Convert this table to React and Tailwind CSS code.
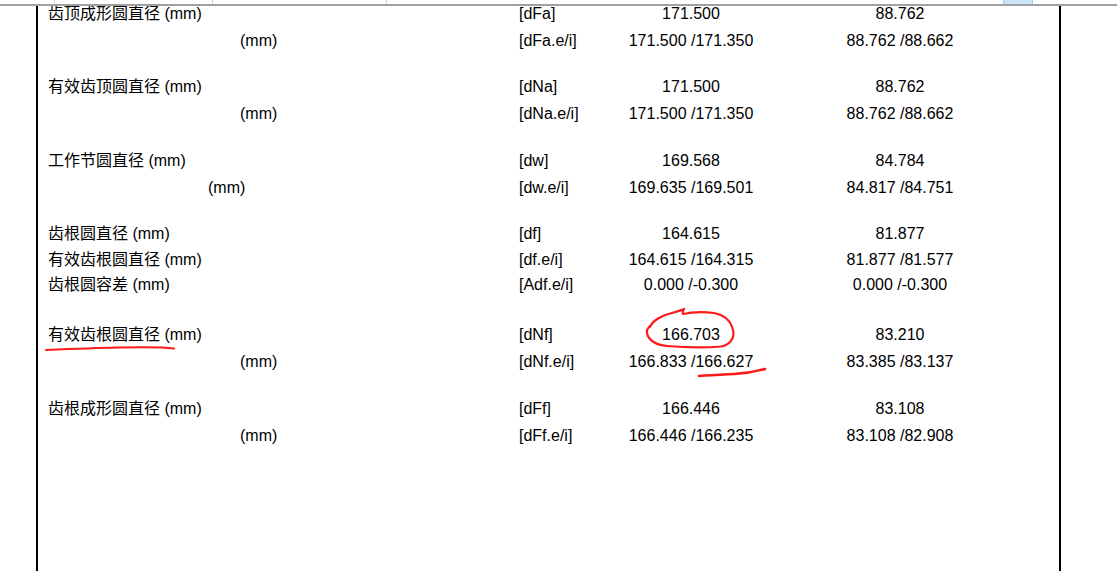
import React from 'react';

const rows = [
  { label: '齿顶成形圆直径 (mm)', indent: '', mt: '-mt-[5px]', sym: '[dFa]', a: '171.500', b: '88.762' },
  { label: '(mm)', indent: 'pl-[192px]', mt: 'mt-[2px]', sym: '[dFa.e/i]', a: '171.500 /171.350', b: '88.762 /88.662' },
  { label: '有效齿顶圆直径 (mm)', indent: '', mt: 'mt-[21px]', sym: '[dNa]', a: '171.500', b: '88.762' },
  { label: '(mm)', indent: 'pl-[192px]', mt: 'mt-[2px]', sym: '[dNa.e/i]', a: '171.500 /171.350', b: '88.762 /88.662' },
  { label: '工作节圆直径 (mm)', indent: '', mt: 'mt-[22px]', sym: '[dw]', a: '169.568', b: '84.784' },
  { label: '(mm)', indent: 'pl-[160px]', mt: 'mt-[2px]', sym: '[dw.e/i]', a: '169.635 /169.501', b: '84.817 /84.751' },
  { label: '齿根圆直径 (mm)', indent: '', mt: 'mt-[21px]', sym: '[df]', a: '164.615', b: '81.877' },
  { label: '有效齿根圆直径 (mm)', indent: '', mt: 'mt-[1px]', sym: '[df.e/i]', a: '164.615 /164.315', b: '81.877 /81.577' },
  { label: '齿根圆容差 (mm)', indent: '', mt: 'mt-0', sym: '[Adf.e/i]', a: '0.000 /-0.300', b: '0.000 /-0.300' },
  { label: '有效齿根圆直径 (mm)', indent: '', mt: 'mt-[25px]', sym: '[dNf]', a: '166.703', b: '83.210' },
  { label: '(mm)', indent: 'pl-[192px]', mt: 'mt-[2px]', sym: '[dNf.e/i]', a: '166.833 /166.627', b: '83.385 /83.137' },
  { label: '齿根成形圆直径 (mm)', indent: '', mt: 'mt-[22px]', sym: '[dFf]', a: '166.446', b: '83.108' },
  { label: '(mm)', indent: 'pl-[192px]', mt: 'mt-[2px]', sym: '[dFf.e/i]', a: '166.446 /166.235', b: '83.108 /82.908' },
];

// red pen marks drawn on top of the report
const Marks = () => (
  <svg className="absolute inset-0 pointer-events-none" width="1117" height="571" viewBox="0 0 1117 571">
    <path
      d="M46 350 C 70 349, 95 348, 118 347.5 C 140 347, 160 346.5, 174 348.5"
      fill="none"
      stroke="#ff1a1a"
      strokeWidth="2"
      strokeLinecap="round"
    />
    <path
      d="M650 327 C 652 321, 662 315, 672 313 C 677 312, 681 310, 684 309 C 683 311, 682 313, 683 314 C 692 312, 705 312, 714 313 C 724 315, 731 321, 733 330 C 735 338, 730 345, 721 346.5 C 705 348, 685 347.5, 667 346 C 656 345, 648 340, 647 333 C 646 330, 648 328, 650 326"
      fill="none"
      stroke="#ff1a1a"
      strokeWidth="2.2"
      strokeLinecap="round"
      strokeLinejoin="round"
    />
    <path
      d="M699 376 C 712 375, 724 374.5, 734 374 C 745 373.5, 754 372, 765 369"
      fill="none"
      stroke="#ff1a1a"
      strokeWidth="2.6"
      strokeLinecap="round"
    />
  </svg>
);

const App = () => {
  return (
    <div
      className="relative w-[1117px] h-[571px] overflow-hidden bg-white text-black flex flex-col"
      style={{ fontFamily: '"Liberation Sans", "Noto Sans CJK SC", sans-serif' }}
    >
      {/* header strip cut off at the top */}
      <div className="relative h-[4px] shrink-0 flex">
        <div className="w-[55px] border-r border-[#d4d4d4]" />
        <div className="w-[158px] border-r border-[#d4d4d4]" />
        <div className="w-[174px] border-r border-[#d4d4d4]" />
        <div className="w-[616px]" />
        <div className="w-[30px] bg-[#cce4f7] border-x border-[#99c9ef]" />
      </div>
      <div className="h-[2px] shrink-0 bg-[#a0a0a0]" />

      {/* report page */}
      <div className="ml-[36px] w-[1025px] flex-1 border-l-2 border-r-2 border-black overflow-hidden">
        <div className="flex flex-col pl-[10px] text-[16px]">
          {rows.map((r, i) => (
            <div key={i} className={`flex items-center h-[25px] ${r.mt}`}>
              <div className={`w-[471px] whitespace-nowrap ${r.indent}`}>{r.label}</div>
              <div className="w-[101px] whitespace-nowrap">{r.sym}</div>
              <div className="w-[142px] text-center whitespace-nowrap">{r.a}</div>
              <div className="w-[276px] text-center whitespace-nowrap">{r.b}</div>
            </div>
          ))}
        </div>
      </div>

      <Marks />
    </div>
  );
};

export default App;
